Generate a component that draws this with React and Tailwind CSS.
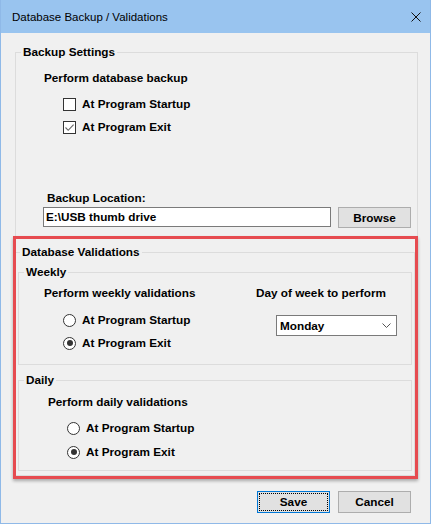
import React from "react";

// Win10 style dialog: Database Backup / Validations
const body = "font-['Liberation_Sans',Arial,sans-serif] text-[11.75px] font-bold leading-[14px] text-black";

function CheckBox({ checked, label }) {
  return (
    <div className="flex items-center h-[14px]">
      <span className="w-[13px] h-[13px] border border-[#333333] bg-white flex items-center justify-center">
        {checked && (
          <svg width="11" height="11" viewBox="0 0 11 11">
            <path d="M1.5 5.5 L4.2 8.3 L9.6 2.6" fill="none" stroke="#666666" strokeWidth="1.1" />
          </svg>
        )}
      </span>
      <span className="ml-[6px]">{label}</span>
    </div>
  );
}

function Radio({ checked, label }) {
  return (
    <div className="flex items-center h-[14px]">
      <span className="w-[13px] h-[13px] rounded-full border border-[#333333] bg-white flex items-center justify-center">
        {checked && <span className="w-[6px] h-[6px] rounded-full bg-[#333333]" />}
      </span>
      <span className="ml-[6px]">{label}</span>
    </div>
  );
}

export default function App() {
  return (
    <div className={`w-[431px] h-[524px] bg-[#f0f0f0] border-x border-b border-[#8fb9e8] ${body}`}>
      {/* title bar */}
      <div className="h-[33px] bg-[#99c4ef] flex items-center justify-between pl-[11px] pr-[9px]">
        <span className="font-['Liberation_Sans',Arial,sans-serif] text-[11.5px] font-normal">
          Database Backup / Validations
        </span>
        <svg width="10" height="10" viewBox="0 0 10 10">
          <path d="M0.5 0.5 L9.5 9.5 M9.5 0.5 L0.5 9.5" stroke="#111111" strokeWidth="1" />
        </svg>
      </div>

      {/* backup settings */}
      <fieldset className="ml-[14px] mt-[12px] w-[403px] border border-b-0 border-[#dcdcdc] pb-[8px]">
        <legend className="ml-[5px] px-[2px]">Backup Settings</legend>
        <div className="pl-[28px] pt-[12px]">
          <div>Perform database backup</div>
          <div className="ml-[19px] mt-[12px]">
            <CheckBox label="At Program Startup" />
          </div>
          <div className="ml-[19px] mt-[9px]">
            <CheckBox checked label="At Program Exit" />
          </div>
          <div className="ml-[3px] mt-[57px]">Backup Location:</div>
          <div className="flex mt-[2px] -ml-[1px]">
            <div className="w-[288px] h-[20px] bg-white border border-[#7a7a7a] pl-[2px] flex items-center">
              E:\USB thumb drive
            </div>
            <div className="ml-[7px] w-[73px] h-[21px] bg-[#e1e1e1] border border-[#adadad] flex items-center justify-center">
              Browse
            </div>
          </div>
        </div>
      </fieldset>

      {/* highlighted validations area */}
      <div className="ml-[12px] w-[405px] border-[3px] border-[#e64b50] shadow-[0_2px_3px_rgba(0,0,0,0.3)]">
        <fieldset className="mt-[6px] w-full border-t border-r border-b border-[#dcdcdc] pb-[4px]">
          <legend className="ml-[4px] px-[2px]">Database Validations</legend>

          <fieldset className="ml-[2px] mt-[6px] w-[394px] border border-[#dcdcdc] pb-[14px]">
            <legend className="ml-[5px] px-[2px]">Weekly</legend>
            <div className="flex pl-[25px] pt-[7px]">
              <div className="w-[212px]">
                <div>Perform weekly validations</div>
                <div className="ml-[19px] mt-[13px]">
                  <Radio label="At Program Startup" />
                </div>
                <div className="ml-[19px] mt-[9px]">
                  <Radio checked label="At Program Exit" />
                </div>
              </div>
              <div>
                <div>Day of week to perform</div>
                <div className="ml-[20px] mt-[15px] w-[121px] h-[21px] bg-white border border-[#7a7a7a] flex items-center justify-between pl-[3px] pr-[5px]">
                  <span>Monday</span>
                  <svg width="9" height="5" viewBox="0 0 9 5">
                    <path d="M0.5 0.5 L4.5 4.5 L8.5 0.5" fill="none" stroke="#555555" strokeWidth="1" />
                  </svg>
                </div>
              </div>
            </div>
          </fieldset>

          <fieldset className="ml-[2px] mt-[8px] w-[394px] border border-[#dcdcdc] pb-[11px]">
            <legend className="ml-[5px] px-[2px]">Daily</legend>
            <div className="pl-[29px] pt-[8px]">
              <div>Perform daily validations</div>
              <div className="ml-[19px] mt-[12px]">
                <Radio label="At Program Startup" />
              </div>
              <div className="ml-[19px] mt-[10px]">
                <Radio checked label="At Program Exit" />
              </div>
            </div>
          </fieldset>
        </fieldset>
      </div>

      {/* buttons */}
      <div className="flex justify-end gap-[8px] pr-[19px] mt-[12px]">
        <div className="w-[73px] h-[22px] bg-[#e1e1e1] border border-[#0078d7] p-[1px]">
          <div className="w-full h-full border border-dotted border-black flex items-center justify-center">
            Save
          </div>
        </div>
        <div className="w-[73px] h-[22px] bg-[#e1e1e1] border border-[#adadad] flex items-center justify-center">
          Cancel
        </div>
      </div>
    </div>
  );
}
